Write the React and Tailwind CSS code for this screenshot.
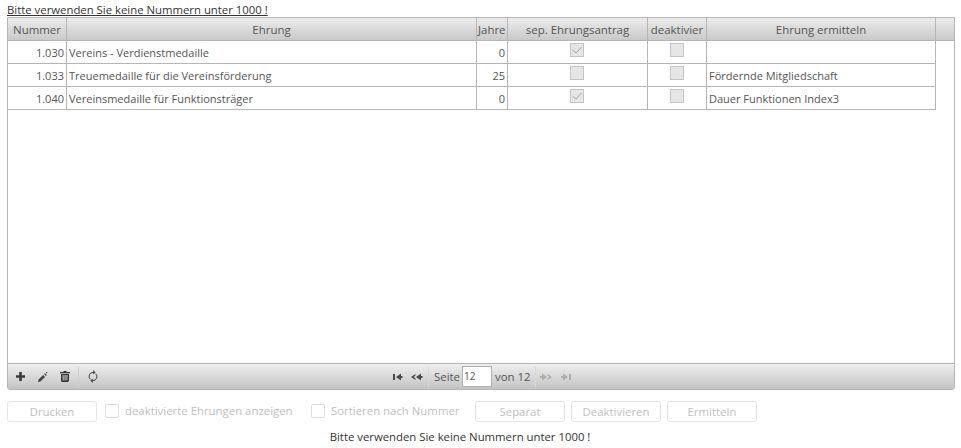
import React from 'react';

const FONT = "font-['Open_Sans',_'Noto_Sans',_sans-serif]";

const rows = [
  { nummer: '1.030', name: 'Vereins - Verdienstmedaille', jahre: '0', sep: true, ermitteln: '' },
  { nummer: '1.033', name: 'Treuemedaille für die Vereinsförderung', jahre: '25', sep: false, ermitteln: 'Fördernde Mitgliedschaft' },
  { nummer: '1.040', name: 'Vereinsmedaille für Funktionsträger', jahre: '0', sep: true, ermitteln: 'Dauer Funktionen Index3' },
];

const GridCheck = ({ checked }) => (
  <span className="flex h-[14px] w-[14px] items-center justify-center border border-[#c4c4c4] bg-[#e6e6e6]">
    {checked && (
      <svg width="12" height="12" viewBox="0 0 12 12" fill="none">
        <path d="M1.5 6 L5 9 L10.5 3" stroke="#a3a3a3" strokeWidth="1" />
      </svg>
    )}
  </span>
);

const HeadCell = ({ className, children }) => (
  <div className={`flex h-full items-center justify-center overflow-hidden whitespace-nowrap border-r border-[#b5b5b5] pt-[1px] ${className}`}>
    {children}
  </div>
);

const DisabledButton = ({ children }) => (
  <button disabled className="h-[21px] w-[90px] rounded-[3px] border border-[#e4e4e4] bg-white text-[11.4px] text-[#c0c0c0]">
    {children}
  </button>
);

const DisabledCheck = ({ label, className }) => (
  <label className={`flex items-center ${className}`}>
    <span className="h-[14px] w-[14px] rounded-[2px] border border-[#dcdcdc] bg-white" />
    <span className="ml-[6px] -translate-y-[1px] whitespace-nowrap text-[11.4px] text-[#c0c0c0]">{label}</span>
  </label>
);

export default function App() {
  return (
    <div className={`${FONT} h-[448px] w-[961px] overflow-hidden bg-white text-[11px] text-[#444]`}>
      <div className="h-[17px] pl-[7px] pt-[2px] text-[11.35px] leading-[15px] text-[#333] underline">
        Bitte verwenden Sie keine Nummern unter 1000 !
      </div>

      <div className="ml-[7px] flex h-[373px] w-[948px] flex-col rounded-b-[3px] border border-[#b5b5b5]">
        <div className="flex h-[23px] flex-none border-b border-[#b5b5b5] bg-gradient-to-b from-[#ececec] to-[#c9c9c9] text-[11.45px] text-[#555]">
          <HeadCell className="w-[59px]">Nummer</HeadCell>
          <HeadCell className="w-[410px]">Ehrung</HeadCell>
          <HeadCell className="w-[31px] !justify-start pl-[1px]">Jahre</HeadCell>
          <HeadCell className="w-[140px]">sep. Ehrungsantrag</HeadCell>
          <HeadCell className="w-[59px]">deaktivier</HeadCell>
          <HeadCell className="w-[229px]">Ehrung ermitteln</HeadCell>
        </div>

        <div className="flex-1 bg-white">
          {rows.map((row) => (
            <div key={row.nummer} className="flex h-[23px] w-[928px] items-stretch border-b border-[#b5b5b5] text-[#555]">
              <div className="flex w-[59px] items-center justify-end border-r border-[#b5b5b5] pr-[2px] pt-[2px]">{row.nummer}</div>
              <div className="flex w-[410px] items-center overflow-hidden whitespace-nowrap border-r border-[#b5b5b5] pl-[2px] pt-[2px]">{row.name}</div>
              <div className="flex w-[31px] items-center justify-end border-r border-[#b5b5b5] pr-[2px] pt-[2px]">{row.jahre}</div>
              <div className="flex w-[140px] items-center justify-center border-r border-[#b5b5b5] pb-[4px] pr-[1px]"><GridCheck checked={row.sep} /></div>
              <div className="flex w-[59px] items-center justify-center border-r border-[#b5b5b5] pb-[4px] pr-[1px]"><GridCheck /></div>
              <div className="flex w-[229px] items-center overflow-hidden whitespace-nowrap border-r border-[#b5b5b5] pl-[2px] pt-[2px]">{row.ermitteln}</div>
            </div>
          ))}
        </div>

        <div className="relative flex h-[26px] flex-none items-center border-t border-[#b5b5b5] bg-gradient-to-b from-[#eeeeee] to-[#c4c4c4]">
          <div className="flex items-center pl-[8px]">
            <svg width="9" height="9" viewBox="0 0 9 9"><path d="M3.2 0h2.6v3.2H9v2.6H5.8V9H3.2V5.8H0V3.2h3.2z" fill="#3a3a3a" /></svg>
            <svg className="ml-[13px]" width="10" height="10" viewBox="0 0 10 10"><path d="M0 10l.5-2.4 4.6-4.6 1.9 1.9L2.4 9.5zM6 2.1l.9-.9 1.9 1.9-.9.9zM8 0h1.2v1.2H8z" fill="#444" /></svg>
            <svg className="ml-[12px]" width="10" height="11" viewBox="0 0 10 11"><path d="M3.5 0h3v1H10v1.2H0V1h3.5zM1 3h8v7l-1 1H2l-1-1zM2.6 4v5.6h1V4zm1.9 0v5.6h1V4zm1.9 0v5.6h1V4z" fill="#333" /></svg>
            <div className="ml-[8px] h-[20px] w-px bg-[#cfcfcf]" />
            <svg className="ml-[9px]" width="10" height="13" viewBox="0 0 10 13" fill="none"><path d="M6 2.4H5A4 4 0 0 0 2.2 9.2M4 10.6h1A4 4 0 0 0 7.8 3.8" stroke="#444" strokeWidth="1" /><path d="M5.2 0l2.4 2.4-2.4 2.2zM4.8 13l-2.4-2.4 2.4-2.2z" fill="#444" /></svg>
          </div>

          <div className="absolute left-[385px] top-0 flex h-full items-center">
            <svg width="10" height="8" viewBox="0 0 10 8"><path d="M0 1h2v6H0zM3 4l5-3.5v2.5h1.5v2H8v2.5z" fill="#4a4a4a" /></svg>
            <svg className="ml-[8px]" width="12" height="8" viewBox="0 0 12 8"><path d="M0 4l4.5-3v1.5L2.8 4l1.7 1.5V7zM5 4l5-3.5V3h1.5v2H10v2.5z" fill="#4a4a4a" /></svg>
            <div className="ml-[5px] h-[20px] w-px bg-[#d8d8d8]" />
            <span className="ml-[5px] text-[11.4px] text-[#555]">Seite</span>
            <span className="ml-[2px] flex h-[21px] w-[30px] items-center border border-[#b0b0b0] bg-white pl-[1px] text-[10px] text-[#555]">12</span>
            <span className="ml-[3px] text-[11.4px] text-[#555]">von 12</span>
            <div className="ml-[4px] h-[20px] w-px bg-[#d8d8d8]" />
            <svg className="ml-[4px]" width="12" height="8" viewBox="0 0 12 8"><path d="M0 3h2V.5L7 4 2 7.5V5H0zM7.5 1L12 4 7.5 7V5.5L9.2 4 7.5 2.5z" fill="#9f9f9f" opacity=".75" /></svg>
            <svg className="ml-[9px]" width="10" height="8" viewBox="0 0 10 8"><path d="M0 3h2V.5L7 4 2 7.5V5H0zM8 1h2v6H8z" fill="#9f9f9f" opacity=".75" /></svg>
          </div>
        </div>
      </div>

      <div className="mt-[11px] flex items-center pl-[7px]">
        <DisabledButton>Drucken</DisabledButton>
        <DisabledCheck className="ml-[8px] w-[206px]" label="deaktivierte Ehrungen anzeigen" />
        <DisabledCheck className="w-[164px]" label="Sortieren nach Nummer" />
        <div className="flex gap-[6px]">
          <DisabledButton>Separat</DisabledButton>
          <DisabledButton>Deaktivieren</DisabledButton>
          <DisabledButton>Ermitteln</DisabledButton>
        </div>
      </div>

      <div className="mt-[7px] w-[920px] text-center text-[11.35px] leading-[16px] text-[#333]">
        Bitte verwenden Sie keine Nummern unter 1000 !
      </div>
    </div>
  );
}
